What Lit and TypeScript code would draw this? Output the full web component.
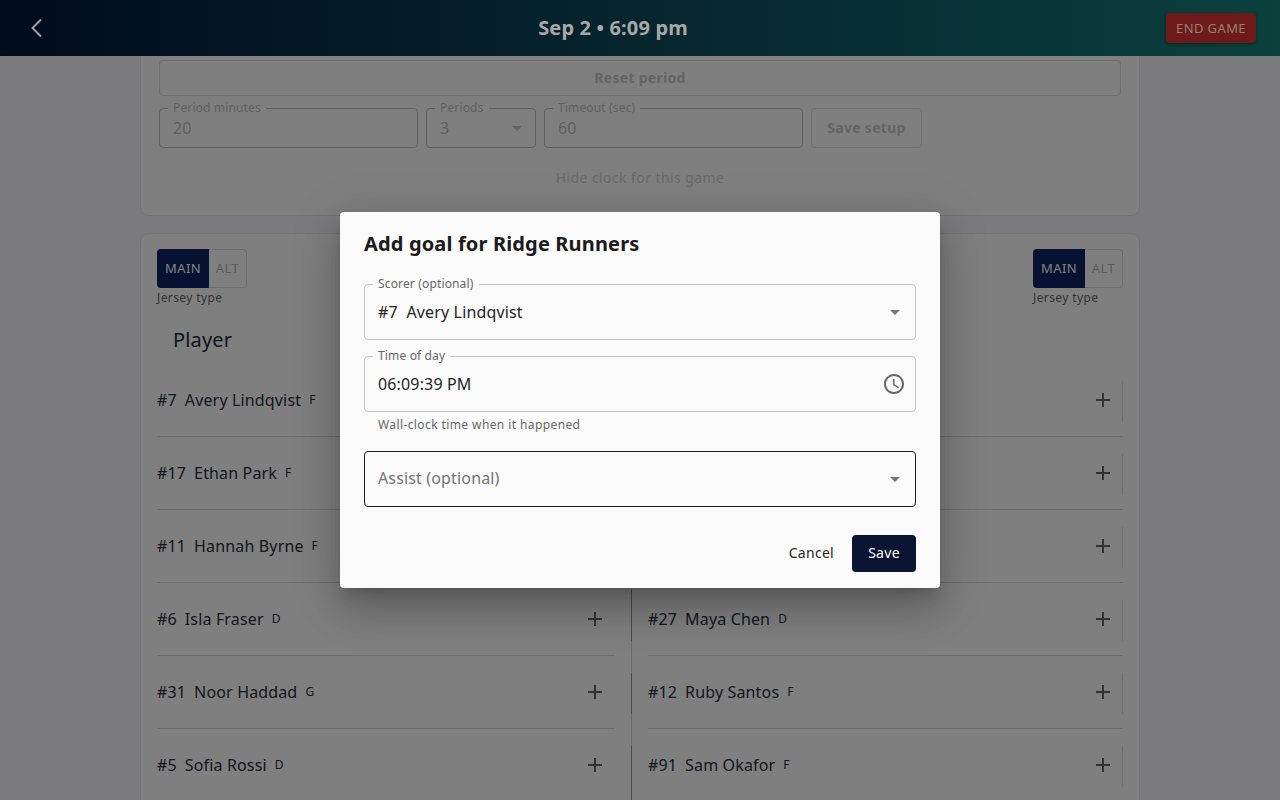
import { LitElement, html, css, svg } from "lit";
import { customElement } from "lit/decorators.js";

const left = [
  ["#7", "Avery Lindqvist", "F"],
  ["#17", "Ethan Park", "F"],
  ["#11", "Hannah Byrne", "F"],
  ["#6", "Isla Fraser", "D"],
  ["#31", "Noor Haddad", "G"],
  ["#5", "Sofia Rossi", "D"],
];
const right = [
  ["#2", "Ben Tran", "D"],
  ["#9", "Chloe Novak", "F"],
  ["#19", "Liam Ortiz", "F"],
  ["#27", "Maya Chen", "D"],
  ["#12", "Ruby Santos", "F"],
  ["#91", "Sam Okafor", "F"],
];

const plus = svg`<svg class="plus" viewBox="0 0 24 24" width="24" height="24"><path d="M19 13h-6v6h-2v-6H5v-2h6V5h2v6h6v2z" fill="currentColor"/></svg>`;
const caret = svg`<svg class="caret" viewBox="0 0 24 24" width="24" height="24"><path d="M7 10l5 5 5-5z" fill="currentColor"/></svg>`;
const clock = svg`<svg class="clock" viewBox="0 0 24 24" width="24" height="24"><path d="M11.99 2C6.47 2 2 6.48 2 12s4.47 10 9.99 10C17.52 22 22 17.52 22 12S17.52 2 11.99 2zM12 20c-4.42 0-8-3.58-8-8s3.58-8 8-8 8 3.58 8 8-3.58 8-8 8zm.5-13H11v6l5.25 3.15.75-1.23-4.5-2.67z" fill="currentColor"/></svg>`;

@customElement("app-root")
export class AppRoot extends LitElement {
  static styles = css`
    :host {
      display: block;
      width: 1280px;
      height: 800px;
      overflow: hidden;
      position: relative;
      background: #f6f6fa;
      font-family: "Noto Sans", sans-serif;
      color: #2a2f3a;
    }
    * { box-sizing: border-box; }
    .bar {
      position: relative;
      z-index: 3;
      height: 56px;
      display: flex;
      align-items: center;
      padding: 0 24px 0 25px;
      background: linear-gradient(90deg, #010b1e 0%, #0b403d 100%);
    }
    .back { width: 24px; height: 24px; color: #a5a5a5; display: block; margin-right: 11px; flex: none; }
    .when {
      flex: 1;
      text-align: center;
      font-size: 20px;
      font-weight: 700;
      letter-spacing: .15px;
      line-height: 56px;
      color: #a8a8a8;
    }
    .end {
      height: 30px;
      width: 90px;
      flex: none;
      display: flex;
      align-items: center;
      justify-content: center;
      font-size: 13px;
      letter-spacing: .4px;
      color: #8e8272;
      background: #6e1a1a;
      border-radius: 4px;
      box-shadow: 0 1px 3px rgba(0,0,0,.4);
    }
    .content {
      width: 1000px;
      margin: 0 auto;
      display: flex;
      flex-direction: column;
      gap: 17px;
    }
    .card {
      background: #fff;
      border: 1px solid #e6e6e6;
      border-radius: 8px;
    }
    .setup {
      border-top: 0;
      border-radius: 0 0 8px 8px;
      height: 160px;
      padding: 4px 18px 0;
      display: flex;
      flex-direction: column;
    }
    .reset {
      height: 36px;
      border: 1px solid #dcdcdc;
      border-radius: 4px;
      display: flex;
      align-items: center;
      justify-content: center;
      padding-bottom: 2px;
      font-size: 14px;
      font-weight: 700;
      letter-spacing: .3px;
      color: #c8c8c8;
    }
    .setup-row {
      display: flex;
      gap: 8px;
      margin-top: 12px;
    }
    .mini {
      position: relative;
      height: 40px;
      border: 1px solid #bcbcbc;
      border-radius: 4px;
      padding-left: 13px;
      display: flex;
      align-items: center;
      font-size: 16px;
      letter-spacing: .15px;
      color: #bcbcbc;
    }
    .mini .lab {
      position: absolute;
      left: 8px;
      top: -8px;
      padding: 0 5px;
      background: #fff;
      font-size: 12px;
      line-height: 14px;
      letter-spacing: .15px;
      color: #c0c0c0;
    }
    .mini .caret { position: absolute; right: 6px; top: 7px; color: #c4c4c4; }
    .m1 { width: 259px; }
    .m2 { width: 110px; }
    .save-setup {
      width: 111px;
      height: 40px;
      border: 1px solid #e0e0e0;
      border-radius: 4px;
      display: flex;
      align-items: center;
      justify-content: center;
      padding-bottom: 2px;
      font-size: 14px;
      font-weight: 700;
      letter-spacing: .3px;
      color: #c8c8c8;
    }
    .hide {
      margin-top: 20px;
      text-align: center;
      font-size: 14px;
      line-height: 20px;
      letter-spacing: .42px;
      color: #d0d4d0;
    }
    .roster {
      padding: 15px 16px 0;
      height: 600px;
    }
    .tops { display: flex; justify-content: space-between; }
    .toggle-wrap { display: flex; flex-direction: column; }
    .toggle {
      display: flex;
      width: 90px;
      height: 39px;
      font-size: 13px;
      letter-spacing: .4px;
    }
    .main {
      width: 52px;
      background: #0e2466;
      color: #fff;
      border-radius: 4px 0 0 4px;
      display: flex;
      align-items: center;
      justify-content: center;
      padding-bottom: 2px;
    }
    .alt {
      flex: 1;
      border: 1px solid #dcdcdc;
      border-left: 0;
      border-radius: 0 4px 4px 0;
      display: flex;
      align-items: center;
      justify-content: center;
      padding-bottom: 2px;
      color: #b4b4b4;
    }
    .jt { font-size: 12px; line-height: 18px; letter-spacing: .4px; color: #666; margin-top: 1px; }
    .ph {
      font-size: 20px;
      line-height: 28px;
      letter-spacing: .15px;
      padding-left: 16px;
      margin-top: 19px;
      color: #1d2a44;
    }
    .cols {
      display: grid;
      grid-template-columns: 475px 1fr;
      margin-top: 10px;
    }
    .lcol { border-right: 1px solid #d4d4d4; }
    .row {
      height: 73px;
      display: flex;
      align-items: center;
      font-size: 16px;
      letter-spacing: .15px;
      border-bottom: 1px solid #d8d8d8;
      position: relative;
    }
    .lcol .row { margin-right: 16px; }
    .rcol .row { margin-left: 16px; }
    .num { margin-right: 8px; }
    .pos { font-size: 12px; margin-left: 8px; margin-top: -2px; }
    .row .plus { position: absolute; right: 8px; top: 24px; color: #666; }
    .rule {
      position: absolute;
      right: 0;
      top: 17px;
      width: 1px;
      height: 41px;
      background: #e0e0e0;
    }
    .lcol .rule { right: -17px; background: #949494; }
    .lcol .row:nth-child(4) .rule { top: 7px; height: 51px; }
    .lcol .row:nth-child(6) .rule { height: 60px; }
    .scrim {
      position: absolute;
      inset: 0;
      z-index: 2;
      background: rgba(0,0,0,.5);
      display: flex;
      align-items: center;
      justify-content: center;
    }
    .dialog {
      width: 600px;
      height: 376px;
      background: #fafafa;
      border-radius: 4px;
      padding: 16px 24px;
      box-shadow: 0 11px 15px -7px rgba(0,0,0,.2), 0 24px 38px 3px rgba(0,0,0,.14), 0 9px 46px 8px rgba(0,0,0,.12);
      display: flex;
      flex-direction: column;
    }
    h2 {
      margin: 0;
      font-size: 20px;
      font-weight: 700;
      letter-spacing: .15px;
      line-height: 32px;
      color: #1a1a1a;
    }
    .field {
      position: relative;
      height: 56px;
      border: 1px solid #c4c4c4;
      border-radius: 4px;
      padding: 0 13px;
      display: flex;
      align-items: center;
      font-size: 16px;
      letter-spacing: .15px;
      color: #1f1f1f;
    }
    .field .lab {
      position: absolute;
      left: 8px;
      top: -8px;
      padding: 0 5px;
      background: #fafafa;
      font-size: 12px;
      line-height: 14px;
      letter-spacing: .15px;
      color: #666;
    }
    .field .caret { position: absolute; right: 8px; top: 15px; color: #757575; }
    .field .clock { position: absolute; right: 9px; top: 15px; color: #666; }
    .f1 { margin-top: 24px; }
    .f2 { margin-top: 16px; }
    .help {
      font-size: 12px;
      line-height: 18px;
      padding-left: 14px;
      margin-top: 4px;
      color: #666;
      letter-spacing: .4px;
    }
    .f3 { margin-top: 17px; border-color: #1a1a1a; color: #757575; padding-bottom: 2px; }
    .actions {
      display: flex;
      justify-content: flex-end;
      align-items: center;
      gap: 18px;
      margin-top: 28px;
      font-size: 14px;
      letter-spacing: .28px;
    }
    .cancel { color: #1f1f1f; padding-bottom: 2px; }
    .save {
      width: 64px;
      height: 37px;
      background: #0b1533;
      color: #fff;
      border-radius: 4px;
      display: flex;
      align-items: center;
      justify-content: center;
      padding-bottom: 2px;
    }
  `;

  private row(p: string[]) {
    return html`<div class="row">
      <span class="num">${p[0]}</span><span>${p[1]}</span><span class="pos">${p[2]}</span>
      ${plus}<span class="rule"></span>
    </div>`;
  }

  render() {
    return html`
      <div class="bar">
        <svg class="back" viewBox="0 0 24 24"><path d="M16 3.5 7.5 12l8.5 8.5" fill="none" stroke="currentColor" stroke-width="1.9"/></svg>
        <div class="when">Sep 2 • 6:09 pm</div>
        <div class="end">END GAME</div>
      </div>
      <div class="content">
        <div class="card setup">
          <div class="reset">Reset period</div>
          <div class="setup-row">
            <div class="mini m1"><span class="lab">Period minutes</span>20</div>
            <div class="mini m2"><span class="lab">Periods</span>3${caret}</div>
            <div class="mini m1"><span class="lab">Timeout (sec)</span>60</div>
            <div class="save-setup">Save setup</div>
          </div>
          <div class="hide">Hide clock for this game</div>
        </div>
        <div class="card roster">
          <div class="tops">
            <div class="toggle-wrap">
              <div class="toggle"><span class="main">MAIN</span><span class="alt">ALT</span></div>
              <div class="jt">Jersey type</div>
            </div>
            <div class="toggle-wrap">
              <div class="toggle"><span class="main">MAIN</span><span class="alt">ALT</span></div>
              <div class="jt">Jersey type</div>
            </div>
          </div>
          <div class="ph">Player</div>
          <div class="cols">
            <div class="lcol">${left.map((p) => this.row(p))}</div>
            <div class="rcol">${right.map((p) => this.row(p))}</div>
          </div>
        </div>
      </div>
      <div class="scrim">
        <div class="dialog">
          <h2>Add goal for Ridge Runners</h2>
          <div class="field f1"><span class="lab">Scorer (optional)</span>#7&nbsp; Avery Lindqvist${caret}</div>
          <div class="field f2"><span class="lab">Time of day</span>06:09:39 PM${clock}</div>
          <div class="help">Wall-clock time when it happened</div>
          <div class="field f3">Assist (optional)${caret}</div>
          <div class="actions">
            <span class="cancel">Cancel</span>
            <span class="save">Save</span>
          </div>
        </div>
      </div>
    `;
  }
}
